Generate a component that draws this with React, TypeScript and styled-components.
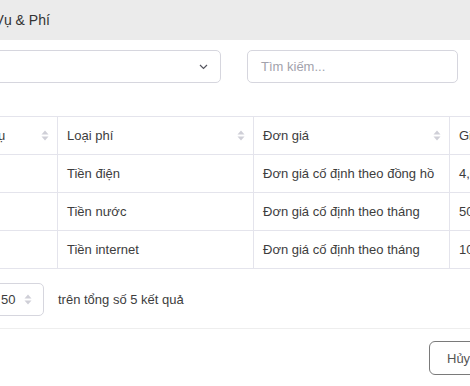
import styled, { createGlobalStyle } from 'styled-components'

const GlobalStyle = createGlobalStyle`
  html, body {
    margin: 0;
    padding: 0;
    background: #ffffff;
  }
  body {
    font-family: "Liberation Sans", Arial, sans-serif;
    color: #3d3d3d;
  }
`

// Khung nhìn cố định, phần modal bị cắt bên trái
const Viewport = styled.div`
  width: 470px;
  height: 386px;
  overflow: hidden;
  background: #ffffff;
`

const Modal = styled.div`
  width: 711px;
  margin-left: -110px;
  display: flex;
  flex-direction: column;
`

const Header = styled.header`
  height: 40px;
  background: #ebebeb;
  display: flex;
  align-items: center;
  padding-left: 12px;
  font-size: 14px;
  color: #333333;
`

const Body = styled.div`
  padding: 0 20px;
  display: flex;
  flex-direction: column;
`

const FilterRow = styled.div`
  margin-top: 10px;
  display: flex;
  gap: 26px;
`

const Field = styled.div<{ $width: number }>`
  box-sizing: border-box;
  width: ${(p) => p.$width}px;
  height: 33px;
  border: 1px solid #d6d6de;
  border-radius: 5px;
  display: flex;
  align-items: center;
  justify-content: space-between;
  padding: 0 12px 0 13px;
  font-size: 13px;
  color: #3d3d3d;
`

const Placeholder = styled.span`
  color: #a2a2ac;
`

const Table = styled.table`
  margin-top: 33px;
  width: 561px;
  border-collapse: collapse;
  table-layout: fixed;
  font-size: 13px;
  color: #3d3d3d;
`

const Th = styled.th`
  height: 37px;
  padding: 0 8px 0 9px;
  border: 1px solid #e4e4ec;
  font-weight: normal;
  text-align: left;
`

const HeadInner = styled.div`
  display: flex;
  align-items: center;
  justify-content: space-between;
`

const Td = styled.td`
  height: 37px;
  padding: 0 9px;
  border: 1px solid #e4e4ec;
  white-space: nowrap;
  overflow: hidden;
`

const Pager = styled.div`
  margin-top: 14px;
  display: flex;
  align-items: center;
  font-size: 13px;
  color: #3d3d3d;
`

const PagerLabel = styled.span`
  width: 46px;
  margin-right: 32px;
  white-space: nowrap;
`

const SizeBox = styled.div`
  box-sizing: border-box;
  width: 56px;
  height: 33px;
  border: 1px solid #d6d6de;
  border-radius: 5px;
  display: flex;
  align-items: center;
  justify-content: space-between;
  padding: 0 11px 0 12px;
  margin-right: 14px;
`

const Footer = styled.footer`
  margin-top: 12px;
  border-top: 1px solid #eeeeee;
  padding: 12px 20px 0;
  display: flex;
  justify-content: flex-end;
  gap: 8px;
`

const Button = styled.button<{ $primary?: boolean }>`
  box-sizing: border-box;
  width: ${(p) => (p.$primary ? 80 : 64)}px;
  height: 34px;
  border-radius: 6px;
  border: 1px solid ${(p) => (p.$primary ? '#2f6fde' : '#7a7a7a')};
  background: ${(p) => (p.$primary ? '#2f6fde' : '#ffffff')};
  color: ${(p) => (p.$primary ? '#ffffff' : '#555555')};
  font-family: "Liberation Sans", Arial, sans-serif;
  font-size: 13px;
  padding: 0 0 0 17px;
  text-align: left;
`

function SortIcon() {
  return (
    <svg width="8" height="11" viewBox="0 0 8 11">
      <path d="M4 0.5 L7.5 4.5 L0.5 4.5 Z" fill="#cfcfd7" />
      <path d="M4 10.5 L7.5 6.5 L0.5 6.5 Z" fill="#cfcfd7" />
    </svg>
  )
}

function Chevron() {
  return (
    <svg width="9" height="6" viewBox="0 0 9 6">
      <path d="M1 1 L4.5 4.5 L8 1" fill="none" stroke="#55555f" strokeWidth="1.2" />
    </svg>
  )
}

const rows = [
  { stt: 1, type: 'Tiền điện', unit: 'Đơn giá cố định theo đồng hồ', price: '4,000' },
  { stt: 2, type: 'Tiền nước', unit: 'Đơn giá cố định theo tháng', price: '50,000' },
  { stt: 3, type: 'Tiền internet', unit: 'Đơn giá cố định theo tháng', price: '100,000' },
]

const columns = [
  { title: 'STT', width: 42, sort: false },
  { title: 'Dịch vụ', width: 105, sort: true },
  { title: 'Loại phí', width: 196, sort: true },
  { title: 'Đơn giá', width: 196, sort: true },
  { title: 'Giá', width: 132, sort: true },
]

export default function App() {
  return (
    <>
      <GlobalStyle />
      <Viewport>
        <Modal>
          <Header>Cấu hình Dịch Vụ &amp; Phí</Header>
          <Body>
            <FilterRow>
              <Field $width={311}>
                <span />
                <Chevron />
              </Field>
              <Field $width={211}>
                <Placeholder>Tìm kiếm...</Placeholder>
              </Field>
            </FilterRow>
            <Table>
              <colgroup>
                {columns.map((c) => (
                  <col key={c.title} style={{ width: c.width }} />
                ))}
              </colgroup>
              <thead>
                <tr>
                  {columns.map((c) => (
                    <Th key={c.title}>
                      <HeadInner>
                        <span>{c.title}</span>
                        {c.sort && <SortIcon />}
                      </HeadInner>
                    </Th>
                  ))}
                </tr>
              </thead>
              <tbody>
                {rows.map((r) => (
                  <tr key={r.stt}>
                    <Td>{r.stt}</Td>
                    <Td />
                    <Td>{r.type}</Td>
                    <Td>{r.unit}</Td>
                    <Td>{r.price}</Td>
                  </tr>
                ))}
              </tbody>
            </Table>
            <Pager>
              <PagerLabel>Hiển thị</PagerLabel>
              <SizeBox>
                <span>50</span>
                <SortIcon />
              </SizeBox>
              <span>trên tổng số 5 kết quả</span>
            </Pager>
          </Body>
          <Footer>
            <Button>Hủy</Button>
            <Button $primary>Lưu</Button>
          </Footer>
        </Modal>
      </Viewport>
    </>
  )
}
